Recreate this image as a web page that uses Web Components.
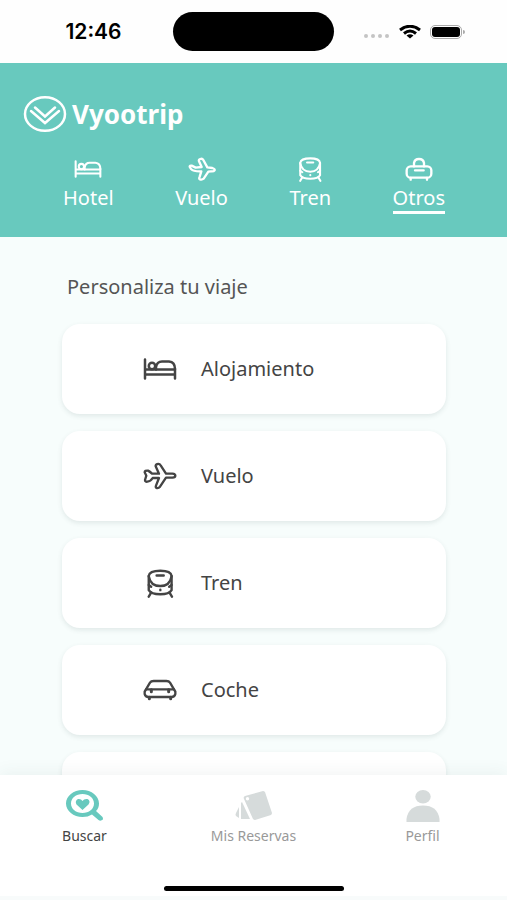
<!DOCTYPE html>
<html lang="es">
<head>
<meta charset="utf-8">
<meta name="viewport" content="width=device-width, initial-scale=1">
<title>Vyootrip</title>
<style>
html, body { margin: 0; height: 100%; }
body { font-family: "Noto Sans", "Open Sans", sans-serif; color: #4a4a4a; background: #f7fdfc; }
</style>
</head>
<body>
<vt-app></vt-app>
<script>
const ICONS = {
  bed: ['0 0 34 22', '<path d="M2 1.5V20.5M32 11V20.5M2 11.5H32M2 16.5H32"/><circle cx="9" cy="8" r="3.2"/><path d="M13 11.5V9Q14 3.5 19 3.5H26Q32 4 32 11"/>'],
  plane: ['36 32 108 88', '<path d="M108 69H127Q136 70 136 75Q136 80 127 81H108L90 108Q86 113 80 112Q76 110 78 105L87 82H68Q62 92 52 93Q45 94 45 88L49 75L44 65Q44 59 54 60Q60 63 66 69H87L77 47Q76 41 83 40Q89 39 92 44Z"/>'],
  fly: ['408 34 90 76', '<path d="M469 67L484 69Q492 72 491 76Q488 80 480 79L472 80L458 101Q453 105 447 103Q443 101 446 95L451 79Q428 80 420 72L416 65Q416 61 422 62L434 68L452 66L444 49Q442 44 448 42Q454 40 457 45Z"/>'],
  train: ['49 350 82 88', '<path d="M57 373Q59 358 91 358Q122 358 124 373V415Q117 427 91 427Q64 427 57 415Z"/><path d="M57 374Q62 403 91 403Q119 403 124 374M80 372H101M64 422L57 434M118 422L125 434M57 400L64 405M124 400L117 405M91 414V415"/>'],
  car: ['36 50 108 70', '<path d="M48 83L60 63Q63 58 71 58H109Q117 58 120 63L132 83"/><path d="M48 83H132L136 90V97Q134 106 124 106H56Q46 106 44 97V90Z"/><path d="M64 84V90M116 84V90M58 107V111M122 107V111" stroke-width="9"/>'],
  bag: ['400 34 90 76', '<rect x="408" y="64" width="74" height="34" rx="12"/><path d="M430 64V54Q432 42 445 42Q458 42 460 54V64M433 76H459M420 99V104M469 99V104"/>'],
  search: ['0 0 38 32', '<path fill="currentColor" stroke="none" fill-rule="evenodd" d="M16.500 0C25.500 0 33 6 33 13.500C33 16.500 32 19 30 21L36.500 27Q38 30 35 30.500Q34 31 32.500 30L26 24.500Q22 27 16.500 27C7.500 27 0 21 0 13.500S7.500 0 16.500 0ZM16.500 4C10 4 5 8 5 13.500S10 23 16.500 23S28 19 28 13.500S23 4 16.500 4Z"/><path fill="currentColor" stroke="none" d="M16.500 20L10.500 14.500Q8.500 11 12 9Q15 8.500 16.500 11Q18 8.500 21.500 9Q25 11 22.500 14.500Z"/>'],
  cards: ['0 0 38 30', '<g fill="currentColor" stroke="none"><path fill-rule="evenodd" d="M10 5L28 0Q29 0 30 1L37 22Q37 23 36 24L20 29Q19 29 18 28L9 8Q8 6 10 5ZM12.500 6A1.700 1.700 0 1 0 12.500 9.400A1.700 1.700 0 1 0 12.500 6Z"/><path d="M6 12L7 11L15 28H6Z"/><path d="M4 16V27L1 25Q0 24 1 22Z"/></g>'],
  person: ['0 0 32 31', '<g fill="currentColor" stroke="none"><ellipse cx="16" cy="6.500" rx="7.500" ry="6.500"/><path d="M0 31V28Q2 15 16 15Q30 15 32 28V31Z"/></g>'],
  logo: ['0 0 44 38', '<ellipse cx="22" cy="19" rx="20" ry="16.800"/><path d="M8 16L22 28L36 16M12 12.500L22 21.500L32 12.500" stroke-linejoin="miter"/>'],
  wifi: ['0 0 22 14', '<path stroke-linecap="butt" d="M1 5Q11 -2.500 21 5M5 8.500Q11 3.500 17 8.500"/><path fill="currentColor" stroke="none" d="M7.500 10.500Q11 8 14.500 10.500L11 13.500Z"/>']
};

class VtIcon extends HTMLElement {
  connectedCallback() {
    const [box, art] = ICONS[this.getAttribute('name')];
    this.attachShadow({ mode: 'open' }).innerHTML = `
      <style>
        :host { display: block; flex: none; width: 36px; height: 30px; }
        svg { display: block; width: 100%; height: 100%; fill: none; stroke: currentColor;
              stroke-width: var(--stroke, 2); stroke-linecap: round; stroke-linejoin: round; }
      </style>
      <svg viewBox="${box}" aria-hidden="true">${art}</svg>`;
  }
}

class VtStatus extends HTMLElement {
  connectedCallback() {
    this.attachShadow({ mode: 'open' }).innerHTML = `
      <style>
        :host { display: grid; grid-template-columns: 1fr 161px 1fr; align-items: center; flex: none;
                height: 63px; background: #fefefe; color: #000; }
        time { justify-self: center; padding-left: 14px; font: 600 21px/24px Inter, sans-serif; }
        .island { height: 39px; border-radius: 20px; background: #000; }
        .right { display: flex; align-items: center; padding-left: 30px; }
        .dots { display: flex; gap: 3px; padding-top: 8px; margin-right: 10px; }
        .dots i { width: 4px; height: 4px; border-radius: 50%; background: #c4c4c4; }
        vt-icon { width: 22px; height: 14px; margin-right: 9px; --stroke: 3; }
        .battery { box-sizing: border-box; width: 32px; height: 14px; padding: 1px; border: 1px solid #aaa; border-radius: 5px; }
        .battery i { display: block; height: 10px; border-radius: 3px; background: #000; }
        .tip { width: 2px; height: 4px; margin-left: 1px; border-radius: 0 2px 2px 0; background: #aaa; }
      </style>
      <time>12:46</time>
      <div class="island"></div>
      <div class="right"><div class="dots"><i></i><i></i><i></i><i></i></div>
        <vt-icon name="wifi"></vt-icon><div class="battery"><i></i></div><div class="tip"></div></div>`;
  }
}

class VtTab extends HTMLElement {
  connectedCallback() {
    const on = this.hasAttribute('selected');
    this.attachShadow({ mode: 'open' }).innerHTML = `
      <style>
        :host { display: block; }
        button { display: flex; flex-direction: column; align-items: center; padding: 0; border: 0;
                 background: none; color: #fff; font: 400 20px/24px "Noto Sans", sans-serif; cursor: pointer; }
        vt-icon { width: 30px; height: 26px; margin-bottom: 4px; --stroke: 7; }
        vt-icon[name=bed] { width: 28px; --stroke: 2.500; }
        span { padding-bottom: 1px; border-bottom: 3px solid transparent; }
        :host([selected]) span { border-color: #fff; }
      </style>
      <button type="button" role="tab" aria-selected="${on}">
        <vt-icon name="${this.getAttribute('icon')}"></vt-icon><span><slot></slot></span>
      </button>`;
  }
}

class VtHeader extends HTMLElement {
  connectedCallback() {
    this.attachShadow({ mode: 'open' }).innerHTML = `
      <style>
        :host { display: block; flex: none; padding: 32px 0 23px; background: #68c9be; color: #fff; }
        .brand { display: flex; align-items: center; gap: 5px; padding: 0 23px; color: inherit;
                 text-decoration: none; font: 700 26px/38px "Noto Sans", sans-serif; }
        .brand vt-icon { width: 44px; height: 38px; --stroke: 2.5; }
        nav { display: flex; justify-content: space-between; padding: 23px 62px 0 63px; }
      </style>
      <a class="brand" href="#"><vt-icon name="logo"></vt-icon><span>Vyootrip</span></a>
      <nav role="tablist"><slot></slot></nav>`;
  }
}

class VtOption extends HTMLElement {
  connectedCallback() {
    this.attachShadow({ mode: 'open' }).innerHTML = `
      <style>
        :host { display: block; }
        button { display: flex; align-items: center; gap: 23px; width: 100%; height: 90px;
                 padding: 0 0 0 80px; border: 0; border-radius: 18px; background: #fff; color: #444;
                 box-shadow: 0 2px 5px rgba(60, 80, 80, .12);
                 font: 400 20px/26px "Noto Sans", sans-serif; cursor: pointer; }
        vt-icon { --stroke: 7; }
        vt-icon[name=bed] { height: 22px; --stroke: 2.500; }
      </style>
      <button type="button"><vt-icon name="${this.getAttribute('icon')}"></vt-icon><span><slot></slot></span></button>`;
  }
}

class VtNavItem extends HTMLElement {
  connectedCallback() {
    this.attachShadow({ mode: 'open' }).innerHTML = `
      <style>
        :host { display: block; flex: 1; color: #d6dbdb; --label: #999; }
        :host([active]) { color: #68c9be; --label: #444; }
        a { display: flex; flex-direction: column; align-items: center; gap: 5px; color: inherit;
            text-decoration: none; font: 400 14px/18px "Noto Sans", sans-serif; }
        vt-icon { width: 38px; height: 32px; }
        span { color: var(--label); }
      </style>
      <a href="#"><vt-icon name="${this.getAttribute('icon')}"></vt-icon><span><slot></slot></span></a>`;
  }
}

class VtNav extends HTMLElement {
  connectedCallback() {
    this.attachShadow({ mode: 'open' }).innerHTML = `
      <style>
        :host { display: flex; flex-direction: column; justify-content: space-between; align-items: center;
                flex: none; height: 121px; border-bottom: 4px solid #f8fbfb; background: #fff;
                box-shadow: 0 -2px 16px rgba(60, 80, 80, .07); position: relative; }
        nav { display: flex; width: 100%; padding-top: 15px; }
        .home { width: 180px; height: 5px; margin-bottom: 5px; border-radius: 3px; background: #000; }
      </style>
      <nav><slot></slot></nav><div class="home"></div>`;
  }
}

class VtApp extends HTMLElement {
  connectedCallback() {
    this.attachShadow({ mode: 'open' }).innerHTML = `
      <style>
        :host { display: flex; flex-direction: column; height: 100vh; }
        main { flex: 1; min-height: 0; overflow: hidden; padding: 36px 61px 0 62px; background: #f7fdfc; }
        h1 { margin: 0 0 23px; padding-left: 5px; color: #555; font: 400 20px/28px "Noto Sans", sans-serif; }
        .list { display: grid; gap: 17px; }
      </style>
      <vt-status></vt-status>
      <vt-header>
        <vt-tab icon="bed">Hotel</vt-tab><vt-tab icon="fly">Vuelo</vt-tab>
        <vt-tab icon="train">Tren</vt-tab><vt-tab icon="bag" selected>Otros</vt-tab>
      </vt-header>
      <main>
        <h1>Personaliza tu viaje</h1>
        <div class="list">
          <vt-option icon="bed">Alojamiento</vt-option>
          <vt-option icon="plane">Vuelo</vt-option>
          <vt-option icon="train">Tren</vt-option>
          <vt-option icon="car">Coche</vt-option>
          <vt-option icon="bag"></vt-option>
        </div>
      </main>
      <vt-nav>
        <vt-nav-item icon="search" active>Buscar</vt-nav-item>
        <vt-nav-item icon="cards">Mis Reservas</vt-nav-item>
        <vt-nav-item icon="person">Perfil</vt-nav-item>
      </vt-nav>`;
  }
}

customElements.define('vt-icon', VtIcon);
customElements.define('vt-status', VtStatus);
customElements.define('vt-tab', VtTab);
customElements.define('vt-header', VtHeader);
customElements.define('vt-option', VtOption);
customElements.define('vt-nav-item', VtNavItem);
customElements.define('vt-nav', VtNav);
customElements.define('vt-app', VtApp);
</script>
</body>
</html>
